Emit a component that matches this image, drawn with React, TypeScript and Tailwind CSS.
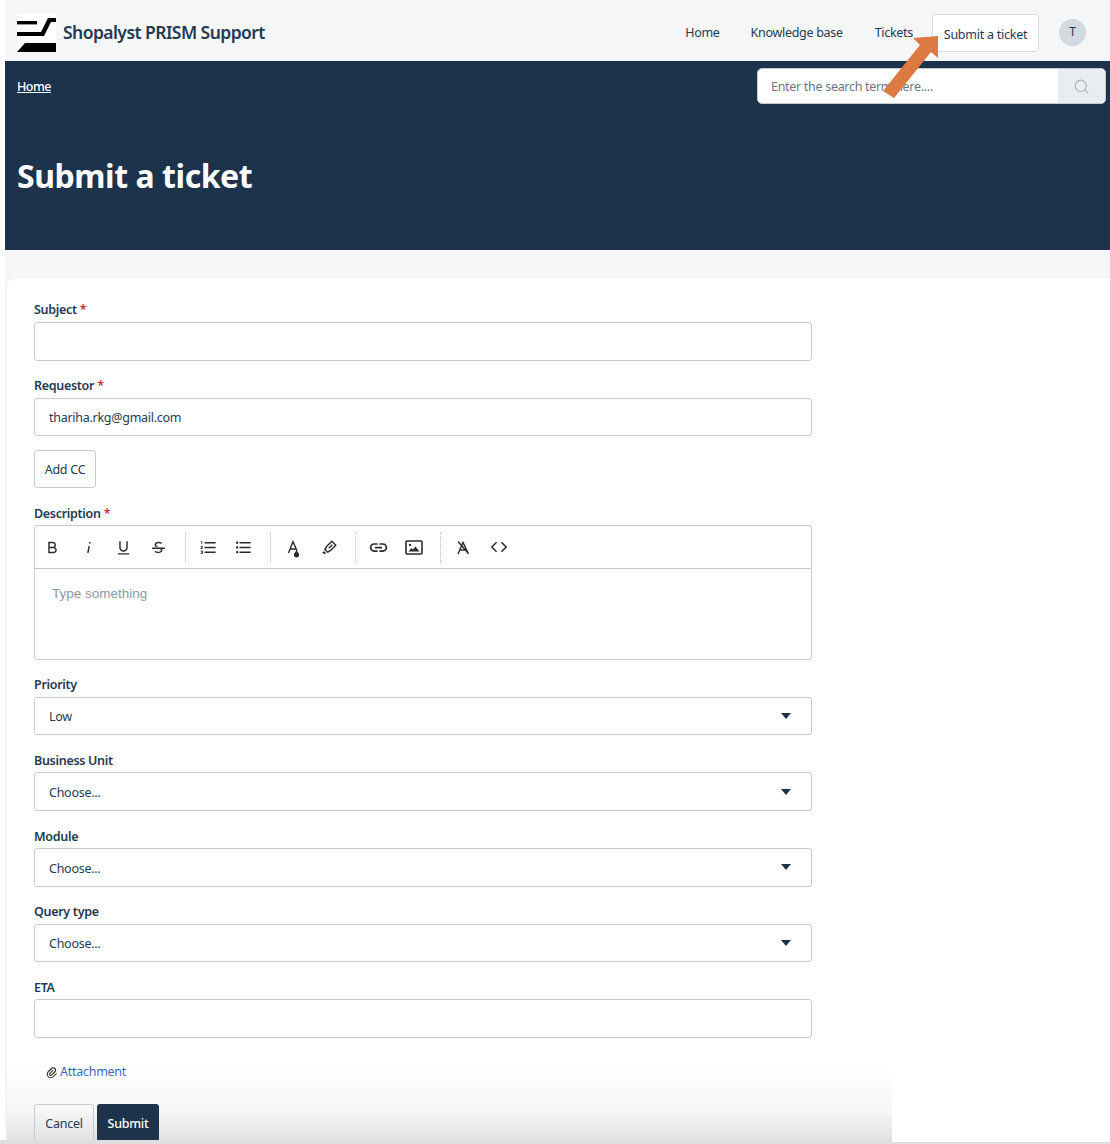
import React from 'react';
import { Search } from 'lucide-react';
import { RiBold, RiUnderline, RiStrikethrough, RiMarkPenLine, RiCodeLine, RiAttachment2 } from 'react-icons/ri';
import { MdFormatListNumbered, MdFormatListBulleted, MdLink } from 'react-icons/md';

const Label: React.FC<{ text: string; required?: boolean }> = ({ text, required }) => (
  <label className="flex h-[23.5px] items-center pt-[1px] text-[12.5px] font-semibold tracking-[-0.3px] text-[#243a52]">
    {text}
    {required && <span className="ml-[3px] text-[#c53030]">*</span>}
  </label>
);

const Field: React.FC<{ label: string; required?: boolean; value?: string; select?: boolean }> = ({ label, required, value, select }) => (
  <div className="mb-[13.67px]">
    <Label text={label} required={required} />
    <div className="flex h-[38.5px] items-center justify-between rounded-[3px] border border-[#c3ccd6] bg-white pl-[14px] pr-[20px] text-[12.5px] tracking-[-0.27px] text-[#243a52]">
      <span className="pt-[3px]">{value}</span>
      {select && <span className="h-0 w-0 border-x-[5.5px] border-t-[6px] border-x-transparent border-t-[#1c3249]" />}
    </div>
  </div>
);

const ItalicIcon = () => (
  <svg width="17" height="17" viewBox="0 0 17 17" fill="none" stroke="currentColor" strokeWidth="1.4">
    <path d="M9.2 7 7.8 14" />
    <circle cx="9.8" cy="3.8" r="0.9" fill="currentColor" stroke="none" />
  </svg>
);

const FontColorIcon = () => (
  <svg width="17" height="20" viewBox="0 0 17 20" fill="none" stroke="currentColor" strokeWidth="1.4" className="mt-[3px]">
    <path d="M3.5 14 8 2.5 12 12M5 10h5.5" />
    <path d="M11.5 11.5c1.6 2 2.6 3 2.6 4.3a2.6 2.6 0 0 1-5.2 0c0-1.3 1-2.3 2.6-4.3z" fill="currentColor" stroke="none" />
  </svg>
);

const ImageIcon = () => (
  <svg width="18" height="15" viewBox="0 0 18 15" fill="none">
    <rect x="1" y="1" width="16" height="13" rx="1" stroke="currentColor" strokeWidth="1.6" />
    <circle cx="5" cy="5" r="1.2" fill="currentColor" />
    <path d="M3.5 11.5 6.5 8l1.5 1.6L10.5 6.5l4 5z" fill="currentColor" />
  </svg>
);

const ClearIcon = () => (
  <svg width="17" height="17" viewBox="0 0 17 17" fill="none" stroke="currentColor" strokeWidth="1.4">
    <path d="M3 15 8 3.5 13.5 15M5 11h6.5" />
    <path d="M3 2.5 13 14" />
  </svg>
);

const groups: React.FC[][] = [
  [() => <RiBold size={17} />, ItalicIcon, () => <RiUnderline size={17} />, () => <RiStrikethrough size={17} />],
  [() => <MdFormatListNumbered size={19} />, () => <MdFormatListBulleted size={19} />],
  [FontColorIcon, () => <RiMarkPenLine size={17} />],
  [() => <MdLink size={21} />, ImageIcon],
  [ClearIcon, () => <RiCodeLine size={18} />],
];

const Toolbar: React.FC = () => (
  <div className="flex h-[43px] items-center border-b border-[#c3ccd6]">
    {groups.map((group, i) => (
      <div
        key={i}
        className={`flex h-[31px] items-center pr-[8.3px] ${i === 0 ? '' : 'pl-[5px]'} ${i < groups.length - 1 ? 'border-r border-dotted border-[#b4bfcb]' : ''}`}
      >
        {group.map((Icon, j) => (
          <span key={j} className="flex w-[35.4px] justify-center text-[#2b2b2b]">
            <Icon />
          </span>
        ))}
      </div>
    ))}
  </div>
);

const navItems = ['Home', 'Knowledge base', 'Tickets'];

export default function App() {
  return (
    <div className="relative h-[1144px] w-[1110px] overflow-hidden bg-white pl-[5px] font-['Noto_Sans',sans-serif] text-[#243a52]">
      <header className="flex h-[61px] items-center justify-between bg-[#f5f6f8] pl-[12px] pr-[24px] pt-[4px]">
        <div className="flex items-center gap-[7px]">
          <svg width="39" height="39" viewBox="0 0 39 39" className="bg-white">
            <rect x="0" y="8" width="20" height="3.4" fill="#000" />
            <polygon points="0,19 24,19 31,5 39,5 39,9 34,9 27,23 0,23" fill="#000" />
            <polygon points="8,30 39,30 39,39 0,39" fill="#000" />
          </svg>
          <span className="text-[17.5px] font-semibold tracking-[-0.56px] text-[#243a52]">Shopalyst PRISM Support</span>
        </div>
        <nav className="mt-[1px] flex items-center text-[12.5px] tracking-[-0.3px]">
          {navItems.map((item, i) => (
            <a key={item} className={i === 0 ? 'mr-[31px]' : 'mr-[32px]'}>{item}</a>
          ))}
          <a className="-ml-[13px] flex h-[38px] w-[107px] items-center justify-center rounded-[3px] border border-[#d5dbe2] bg-white pt-[4px] tracking-[-0.25px]">Submit a ticket</a>
          <span className="mb-[2px] ml-[20px] flex h-[27px] w-[27px] items-center justify-center rounded-full bg-[#d3d9e1] text-[12px]">T</span>
        </nav>
      </header>

      <section className="h-[189px] bg-[#1c334b] pl-[12px] pr-[4px] pt-[7px] text-white">
        <div className="flex items-start justify-between">
          <a className="mt-[10px] text-[12.5px] font-medium tracking-[-0.5px] underline">Home</a>
          <div className="flex h-[36px] w-[349px] overflow-hidden rounded-[5px] border border-[#c3ccd6] bg-white">
            <span className="flex flex-1 items-center pl-[13px] pt-[2px] text-[12.5px] tracking-[-0.3px] text-[#6b7785]">Enter the search term here....</span>
            <span className="flex w-[47px] items-center justify-center bg-[#e9ecf0]">
              <Search size={17} strokeWidth={1.5} className="text-[#a5afba]" />
            </span>
          </div>
        </div>
        <h1 className="mt-[49px] text-[32px] font-bold leading-[46px] tracking-[-0.45px]">Submit a ticket</h1>
      </section>

      <main className="h-[894px] bg-[#f5f6f8] pl-[2px] pt-[28px]">
        <div className="h-[866px] rounded-tl-[8px] bg-white pl-[27px] pt-[20.5px] shadow-[0_0_2px_rgba(0,0,0,0.06)]">
          <div className="w-[778px]">
            <Field label="Subject" required />
            <Field label="Requestor" required value="thariha.rkg@gmail.com" />
            <button className="mb-[13.5px] mt-[14px] flex h-[38px] w-[62px] items-center justify-center rounded-[3px] border border-[#c3ccd6] bg-white pt-[2px] text-[12.5px] tracking-[-0.25px] text-[#243a52]">Add CC</button>
            <Label text="Description" required />
            <div className="mb-[13.67px] h-[134.5px] rounded-[3px] border border-[#c3ccd6]">
              <Toolbar />
              <p className="pl-[17px] pt-[17px] font-['Liberation_Sans',sans-serif] text-[13.5px] leading-[16px] text-[#8a97a6]">Type something</p>
            </div>
            <Field label="Priority" value="Low" select />
            <Field label="Business Unit" value="Choose..." select />
            <Field label="Module" value="Choose..." select />
            <Field label="Query type" value="Choose..." select />
            <Field label="ETA" />
          </div>
          <a className="ml-[11px] mt-[24.6px] flex items-center gap-[1px] text-[12.5px] tracking-[-0.27px] text-[#2f55b5]">
            <RiAttachment2 size={14} className="mt-[3px] text-[#222]" />
            Attachment
          </a>
          <div className="mt-[22.6px] flex gap-[3px] text-[12.5px] tracking-[-0.25px]">
            <button className="relative z-10 h-[38px] w-[60px] rounded-[3px] border border-[#c3ccd6] pt-[3px] text-[#243a52]">Cancel</button>
            <button className="relative z-10 h-[38px] w-[62px] rounded-[3px] bg-[#1c334b] pt-[3px] font-medium text-white">Submit</button>
          </div>
        </div>
      </main>

      {/* fade at the bottom of the form + screenshot edge */}
      <div className="pointer-events-none absolute bottom-[4px] left-[7px] h-[72px] w-[885px] bg-gradient-to-b from-white/0 via-[#f6f6f6] via-60% to-[#e2e2e2]" />
      <div className="absolute bottom-0 left-0 z-20 h-[4px] w-[892px] bg-[#dedede]" />
      <div className="absolute bottom-0 left-[892px] z-20 h-[2px] w-[218px] bg-[#dedede]" />

      {/* annotation arrow */}
      <svg className="pointer-events-none absolute left-[880px] top-[33px]" width="62" height="70" viewBox="880 33 62 70">
        <polygon points="938,36 913,38 920,45 883,91 894,98 931,52 938,58" fill="#dd7a41" />
      </svg>
    </div>
  );
}
